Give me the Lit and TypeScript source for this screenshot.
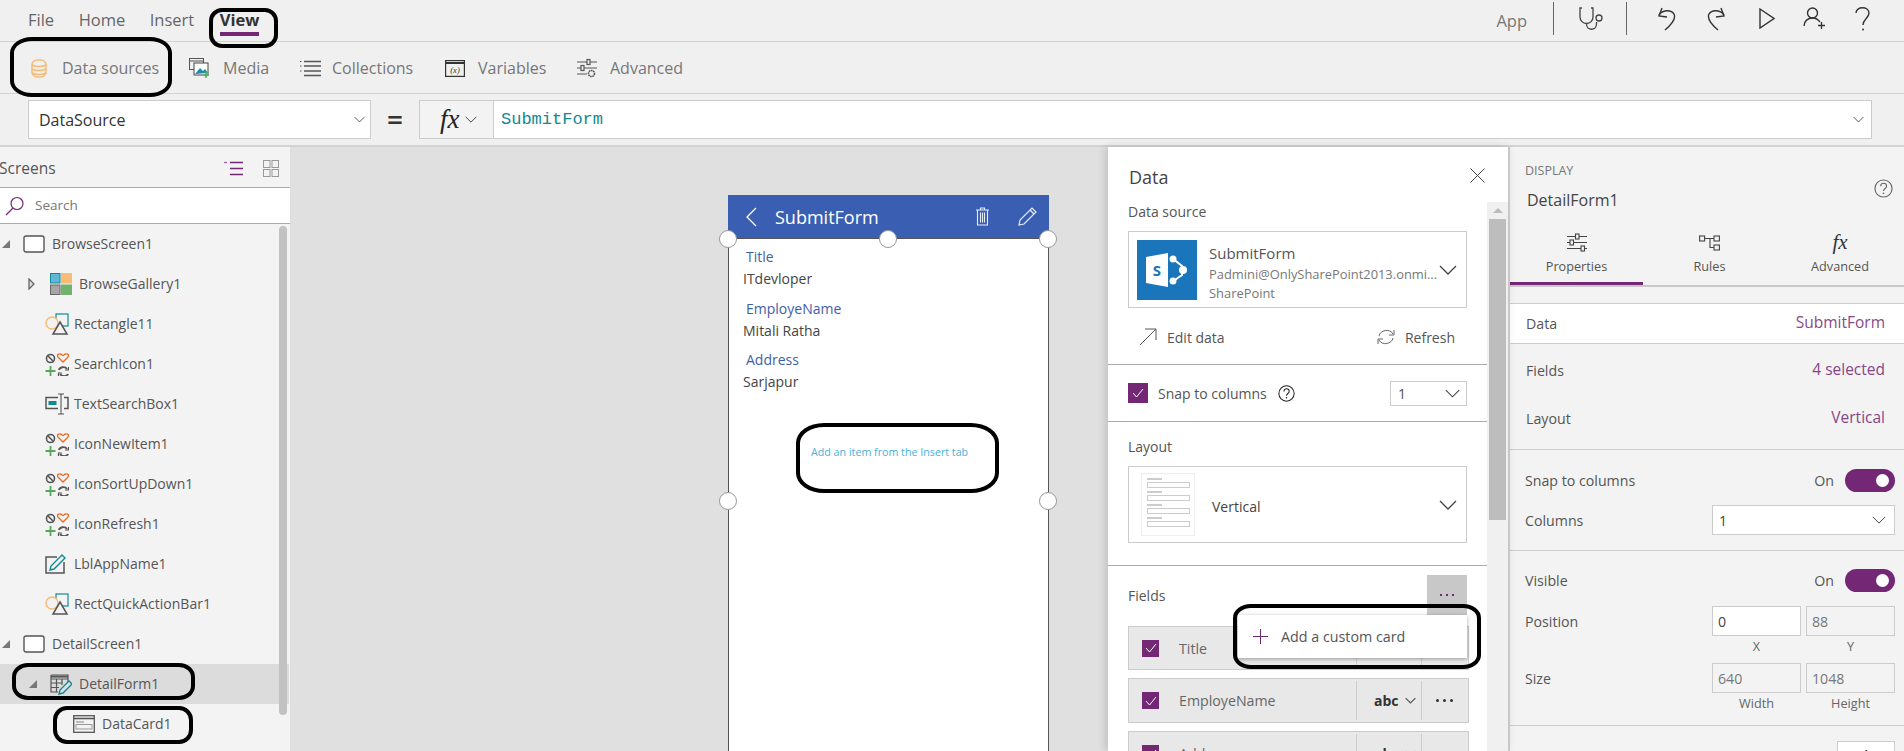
import { LitElement, html, css } from "lit";
import { customElement } from "lit/decorators.js";

const chev = (w = 18, h = 10, c = "#444", sw = 1.3) =>
  html`<svg width=${w} height=${h} viewBox="0 0 18 10"><path d="M1 1l8 8 8-8" fill="none" stroke=${c} stroke-width=${sw * 1.6}/></svg>`;

const icDb = html`<svg width="16" height="19" viewBox="0 0 16 19" fill="none" stroke="#f5bd78" stroke-width="1.6"><rect x="1" y="1" width="14" height="17" rx="5"/><path d="M1 6c3 2 11 2 14 0M1 10c3 2 11 2 14 0M1 14c3 2 11 2 14 0"/></svg>`;
const icMedia = html`<svg width="21" height="20" viewBox="0 0 21 20" fill="none"><rect x=".5" y=".5" width="14" height="11" fill="#f0f0f0" stroke="#555"/><path d="M.5 3h14" stroke="#555"/><rect x="5" y="5" width="14" height="12" fill="#fff" stroke="#444"/><path d="M6 16l5-6 3 3 2-2 3 4z" fill="#1b8fa8"/><path d="M17 14v6M14 17h6" stroke="#4fae5d" stroke-width="1.6"/></svg>`;
const icColl = html`<svg width="21" height="17" viewBox="0 0 21 17" fill="none" stroke="#555" stroke-width="1.4"><path d="M4 1.5h17M4 6h17M4 11h17M4 15.5h17"/><path d="M0 1.5h1.5M0 6h1.5M0 11h1.5" stroke-width="1.2"/></svg>`;
const icVars = html`<svg width="20" height="17" viewBox="0 0 20 17" fill="none"><rect x=".6" y=".6" width="18.8" height="15.8" stroke="#333" stroke-width="1.2"/><path d="M0 3h20" stroke="#333" stroke-width="2"/><text x="10" y="13" text-anchor="middle" font-size="8.5" font-style="italic" fill="#333" font-family="Liberation Serif, serif">(x)</text></svg>`;
const icAdv = html`<svg width="21" height="20" viewBox="0 0 21 20" fill="none" stroke="#555" stroke-width="1.2"><path d="M1 4h20M1 10h20M1 16h10"/><rect x="11" y="1.5" width="3" height="5" fill="#f0f0f0"/><rect x="5" y="7.5" width="3" height="5" fill="#f0f0f0"/><circle cx="15.5" cy="15.5" r="3" fill="#f0f0f0" stroke-width="1.6" stroke-dasharray="1.6 .6"/></svg>`;
const icSliders = html`<svg width="21" height="19" viewBox="0 0 21 19" fill="none" stroke="#444" stroke-width="1.1"><path d="M1 3.5h20M1 9.5h20M1 15.5h20"/><rect x="9.5" y="1" width="3.5" height="5" fill="#f3f3f3"/><rect x="4" y="7" width="3.5" height="5" fill="#f3f3f3"/><rect x="15" y="13" width="3.5" height="5" fill="#f3f3f3"/></svg>`;
const icRules = html`<svg width="21" height="17" viewBox="0 0 21 17" fill="none" stroke="#444" stroke-width="1.1"><rect x=".6" y="2" width="5" height="5"/><rect x="15" y="2" width="5.4" height="5"/><rect x="15" y="11" width="5.4" height="5"/><path d="M5.6 4.5H15M11 4.5v9h4"/></svg>`;

const icScreen = html`<svg width="22" height="18" viewBox="0 0 22 18"><rect x="1" y="1" width="20" height="16" rx="2" fill="#fff" stroke="#555" stroke-width="1.4"/></svg>`;
const icGallery = html`<svg width="22" height="22" viewBox="0 0 22 22"><rect x=".5" y=".5" width="9.5" height="9.5" fill="#63b7d4" stroke="#108a94"/><rect x="11" y="0" width="11" height="10.5" fill="#f7bc75"/><rect x=".5" y="12" width="9.5" height="9.5" fill="#a6a6a6" stroke="#666"/><rect x="11" y="11.5" width="11" height="10.5" fill="#6fb36f"/></svg>`;
const icShape = html`<svg width="24" height="22" viewBox="0 0 24 22" fill="none"><rect x="11" y="1" width="12" height="12" fill="#f3f3f3" stroke="#108a94" stroke-width="1.2"/><circle cx="7" cy="10" r="6" fill="#f3f3f3" stroke="#f5bd78" stroke-width="1.5"/><path d="M15 9l7 12H8z" fill="#f3f3f3" stroke="#555" stroke-width="1.5"/></svg>`;
const icMulti = html`<svg width="24" height="23" viewBox="0 0 24 23" fill="none"><circle cx="5.5" cy="5.5" r="4" stroke="#555" stroke-width="1.6"/><path d="M3 3l5 5" stroke="#555" stroke-width="1.6"/><path d="M18 9l-5-5c-1.5-2 .5-3.600 2.500-3 1 .2 2 1.500 2.500 1.500s1.500-1.300 2.500-1.500c2-.6 4 1 2.500 3z" stroke="#ea6a20" stroke-width="1.3"/><path d="M5.500 13v10M.5 18h10" stroke="#53a85c" stroke-width="1.8"/><path d="M14 17c.5-3 6-4 8-1M23 21c-1 2.500-6 3-8 0" stroke="#555" stroke-width="1.8"/><path d="M20 17h3.500v-3M17 20h-3.500v3" stroke="#555" stroke-width="1.200"/></svg>`;
const icTextbox = html`<svg width="24" height="22" viewBox="0 0 24 22" fill="none"><path d="M13 4.500H1v11h12M19 4.500h4v11h-4" stroke="#555" stroke-width="1.500"/><rect x="3.500" y="8" width="8" height="4" fill="#108a94"/><path d="M13 1h2.500l.5 1 .5-1H19M16 2v17M13 21h2.500l.5-1 .5 1H19" stroke="#555" stroke-width="1.100"/></svg>`;
const icLabel = html`<svg width="21" height="20" viewBox="0 0 21 20" fill="none"><path d="M19 8v11H1V3h11" stroke="#555" stroke-width="1.500"/><path d="M5 16l1-4L17 1l3 3L9 15z" fill="#f3f3f3" stroke="#108a94" stroke-width="1.400"/></svg>`;
const icForm = html`<svg width="22" height="21" viewBox="0 0 22 21" fill="none"><path d="M1 1h17v7M8 18H1V1M1 5h17M1 9h11M1 13.500h8M6.500 5v13M12 5v6" stroke="#555" stroke-width="1.200"/><path d="M1 2.600h17" stroke="#555" stroke-width="2"/><path d="M9 20l1-4 9-9 3 3-9 9z" fill="#e0e0e0" stroke="#108a94" stroke-width="1.400"/></svg>`;
const icCard = html`<svg width="22" height="18" viewBox="0 0 22 18" fill="none"><rect x=".7" y=".7" width="20.600" height="16.600" stroke="#555" stroke-width="1.300"/><path d="M.7 3.500h20.600" stroke="#555" stroke-width="1.600"/><path d="M3 7h8" stroke="#999" stroke-width="1.200"/><rect x="3" y="9.500" width="16" height="4.500" stroke="#999"/></svg>`;
const triDown = html`<svg width="10" height="10" viewBox="0 0 10 10"><path d="M9 1v8H1z" fill="#777"/></svg>`;
const triRight = html`<svg width="7" height="12" viewBox="0 0 7 12"><path d="M1 1l5 5-5 5z" fill="#ddd" stroke="#666" stroke-width="1.300"/></svg>`;

const check = html`<svg width="12" height="10" viewBox="0 0 12 10"><path d="M1 5l3.500 4L11 1" fill="none" stroke="#fff" stroke-width="1"/></svg>`;
const help = (s: number, c: string) =>
  html`<svg width=${s} height=${s} viewBox="0 0 20 20" fill="none"><circle cx="10" cy="10" r="9" stroke=${c} stroke-width="1.200"/><path d="M7 7.500c0-4 6.200-4 6.200 0 0 2.500-3.200 2.500-3.200 5" stroke=${c} stroke-width="1.200"/><circle cx="10" cy="15" r=".9" fill=${c}/></svg>`;

type Row = { n: string; ic: unknown; lv: string; ar?: unknown; sel?: boolean };
const rows: Row[] = [
  { n: "BrowseScreen1", ic: icScreen, lv: "l0", ar: triDown },
  { n: "BrowseGallery1", ic: icGallery, lv: "lg", ar: triRight },
  { n: "Rectangle11", ic: icShape, lv: "l1" },
  { n: "SearchIcon1", ic: icMulti, lv: "l1" },
  { n: "TextSearchBox1", ic: icTextbox, lv: "l1" },
  { n: "IconNewItem1", ic: icMulti, lv: "l1" },
  { n: "IconSortUpDown1", ic: icMulti, lv: "l1" },
  { n: "IconRefresh1", ic: icMulti, lv: "l1" },
  { n: "LblAppName1", ic: icLabel, lv: "l1" },
  { n: "RectQuickActionBar1", ic: icShape, lv: "l1" },
  { n: "DetailScreen1", ic: icScreen, lv: "l0", ar: triDown },
  { n: "DetailForm1", ic: icForm, lv: "lg", ar: triDown, sel: true },
  { n: "DataCard1", ic: icCard, lv: "lc" },
];

const marks = [
  { x: 209, y: 8, w: 69, h: 40, r: "13px" },
  { x: 10, y: 37, w: 162, h: 60, r: "22px / 16px" },
  { x: 12, y: 663, w: 183, h: 37, r: "16px / 14px" },
  { x: 53, y: 706, w: 140, h: 38, r: "14px" },
  { x: 796, y: 423, w: 203, h: 70, r: "28px / 20px" },
  { x: 1233, y: 604, w: 248, h: 65, r: "18px / 14px" },
];

const fields = [
  { n: "Title", h: 44, covered: true },
  { n: "EmployeName", h: 45, covered: false },
  { n: "Address", h: 45, covered: false },
];

const form = [
  ["Title", "ITdevloper"],
  ["EmployeName", "Mitali Ratha"],
  ["Address", "Sarjapur"],
];

const handles = [
  [0, 44],
  [160, 44],
  [320, 44],
  [0, 306],
  [320, 306],
];

@customElement("app-root")
export class AppRoot extends LitElement {
  static styles = css`
    :host { display: block; position: relative; width: 1904px; height: 751px; overflow: hidden; background: #f0f0f0; font-family: "Open Sans", "Noto Sans", sans-serif; color: #555; }
    * { box-sizing: border-box; }
    svg { display: block; flex: none; }

    .top { height: 42px; border-bottom: 1px solid #d2d2d2; display: flex; align-items: center; padding-left: 28px; padding-bottom: 1px; }
    .tab { font-size: 16.500px; color: #666; margin-right: 24.500px; position: relative; line-height: 22px; }
    .tab.on { font-size: 16.500px; font-weight: 700; color: #333; margin-left: 1px; }
    .tab.on::after { content: ""; position: absolute; left: 0; right: 0; top: 23px; height: 4px; background: #742774; }
    .spacer { flex: 1; }
    .app { font-size: 16.500px; color: #777; margin-right: 26px; }
    .sep { width: 1px; height: 33px; background: #666; margin-top: -4px; }
    .ticons { display: flex; align-items: center; height: 36px; margin-top: -3px; }

    .ribbon { height: 52px; border-bottom: 1px solid #d2d2d2; display: flex; align-items: center; padding-left: 31px; padding-top: 1px; }
    .rb { display: flex; align-items: center; font-size: 16px; color: #777; }
    .rb span { margin-left: var(--g); }

    .formula { height: 53px; border-bottom: 2px solid #d2d2d2; display: flex; align-items: flex-start; padding: 6px 0 0 28px; }
    .prop { width: 343px; height: 39px; background: #fff; border: 1px solid #ccc; display: flex; align-items: center; justify-content: space-between; padding: 0 5px 0 10px; font-size: 16px; color: #333; }
    .eq { width: 48px; text-align: center; font-size: 28px; font-weight: 600; color: #333; line-height: 39px; }
    .fx { width: 75px; height: 39px; border: 1px solid #ccc; background: #f3f3f3; display: flex; align-items: center; padding-left: 20px; gap: 5px; }
    .fxt { font-family: "Liberation Serif", serif; font-style: italic; font-size: 27px; color: #222; line-height: 1; }
    .fbox { width: 1378px; height: 39px; background: #fff; border: 1px solid #ccc; border-left: 0; display: flex; align-items: center; justify-content: space-between; padding: 0 7px; font-family: "Liberation Mono", monospace; font-size: 17px; color: #108a94; }
    .fbox span { margin-top: -1px; }

    .main { display: flex; height: 604px; }
    .side { width: 291px; background: #f3f3f3; flex: none; position: relative; border-right: 1px solid #ddd; }
    .shead { height: 40px; display: flex; align-items: center; font-size: 15.500px; color: #555; padding-top: 2px; margin-left: -1px; }
    .shead .t { flex: 1; }
    .search { height: 37px; background: #fff; border: 1px solid #aaa; border-width: 1px 0; display: flex; align-items: center; padding-left: 5px; gap: 10px; font-size: 13.500px; color: #777; }
    .search span { margin-top: -2px; }
    .row { height: 40px; display: flex; align-items: center; font-size: 14px; color: #555; width: 289px; }
    .row span { margin-top: -2px; }
    .row.sel { background: #dcdcdc; }
    .ind { flex: none; display: flex; align-items: center; }
    .l0 .ind { width: 23px; padding-left: 1px; }
    .lg .ind { width: 50px; padding-left: 28px; }
    .l1 .ind { width: 45px; }
    .lc .ind { width: 73px; }
    .ics { flex: none; display: flex; align-items: center; justify-content: flex-start; width: 29px; }
    .sb { position: absolute; left: 279px; top: 79px; width: 8px; height: 489px; border-radius: 4px; background: #c2c2c2; }

    .canvas { flex: 1; background: #e0e0e0; padding: 48px 0 0 437px; min-width: 0; }
    .phone { width: 321px; height: 600px; background: #fff; border: 1px solid #555; border-top: 0; position: relative; }
    .phead { height: 44px; margin: 0 -1px 0 -1px; background: #3a5fb2; display: flex; align-items: center; color: #fff; padding-left: 18px; border-bottom: 1px solid #555; }
    .phead .ti { font-size: 18px; margin-left: 18px; flex: 1; color: #fff; }
    .fields { padding-top: 7px; }
    .fg { margin-left: 14px; height: 51.500px; display: flex; flex-direction: column; justify-content: flex-start; }
    .fg .l { font-size: 14px; color: #3f5ea8; margin-left: 3px; line-height: 22px; }
    .fg .v { font-size: 14px; color: #444; line-height: 22px; }
    .hint { margin: 44px 0 0 82px; font-size: 10.700px; line-height: 15px; color: #4ab0d9; }
    .h { position: absolute; width: 18px; height: 18px; border-radius: 50%; background: #fff; border: 1px solid #999; transform: translate(-9px, -9px); }

    .data { width: 402px; flex: none; background: #fff; border-right: 2px solid #c8c8c8; box-shadow: -3px 0 8px rgba(0,0,0,.14); position: relative; display: flex; flex-direction: column; z-index: 1; }
    .dhead { height: 55px; display: flex; align-items: center; justify-content: space-between; padding: 4px 23px 0 21px; font-size: 18px; color: #444; }
    .dhead svg { margin-top: -2px; }
    .dbody { display: flex; flex: 1; min-height: 0; overflow: hidden; }
    .dcol { width: 379px; flex: none; padding: 0; }
    .dsb { flex: 1; background: #f0f0f0; position: relative; padding: 6px 2px 0; }
    .dsb .up { width: 0; height: 0; border: 5px solid transparent; border-bottom: 5px solid #bbb; border-top: 0; margin: 0 auto 6px; }
    .dsb .th { height: 301px; background: #bdbdbd; margin-top: 0; }
    .sec { padding: 0 20px; border-bottom: 1px solid #aaa; }
    .lab { font-size: 14px; color: #555; line-height: 20px; }
    .box { border: 1px solid #ccc; display: flex; align-items: center; position: relative; }
    .src { height: 77px; margin-top: 9px; padding-left: 8px; }
    .tile { width: 60px; height: 60px; background: #1a75bb; flex: none; display: flex; align-items: center; justify-content: center; margin-right: 12px; }
    .srct { flex: 1; min-width: 0; display: flex; flex-direction: column; margin-top: 5px; }
    .srct .a { font-size: 15px; color: #555; line-height: 22px; }
    .srct .b { font-size: 12.900px; color: #777; line-height: 20px; white-space: nowrap; }
    .srct .b + .b { line-height: 18px; }
    .boxch { margin: 0 9px 0 0; flex: none; }
    .acts { height: 56px; display: flex; align-items: center; justify-content: space-between; padding: 2px 12px 0 11px; font-size: 14px; }
    .act { display: flex; align-items: center; gap: 10px; color: #555; }
    .snap { height: 57px; display: flex; align-items: center; }
    .cb { background: #742774; display: flex; align-items: center; justify-content: center; flex: none; }
    .cb.big { width: 20px; height: 20px; margin-right: 10px; }
    .cb.sm { width: 17px; height: 17px; }
    .snap .txt { font-size: 14px; margin-right: 11px; }
    .mini { width: 77px; height: 25px; border: 1px solid #ccc; margin-left: auto; display: flex; align-items: center; justify-content: space-between; padding: 0 6px 0 7px; font-size: 14px; }
    .lay { padding-top: 15px; padding-bottom: 22px; }
    .lay .box { height: 77px; margin-top: 9px; padding-left: 12px; }
    .thumb { width: 54px; height: 63px; border: 1px solid #eee; padding: 4px 4px 0 5px; display: flex; flex-direction: column; margin-right: 17px; flex: none; }
    .thumb i { display: block; height: 2px; width: 15px; background: #ccc; margin-bottom: 2px; }
    .thumb b { display: block; height: 6px; border: 1px solid #ccc; margin-bottom: 3px; }
    .lay .v { flex: 1; font-size: 14px; color: #444; margin-top: 3px; }
    .fl { padding: 9px 20px 0; }
    .flh { height: 40px; display: flex; align-items: center; justify-content: space-between; margin-bottom: 11px; }
    .flh .lab { margin-top: 2px; }
    .more { width: 40px; height: 40px; background: #c8c8c8; display: flex; align-items: center; justify-content: center; gap: 4px; padding-top: 0; }
    .more i { width: 2px; height: 2px; background: #742774; }
    .frow { display: flex; align-items: center; border: 1px solid #ccc; background: #e8e8e8; margin: 0 -2px 8px 0; flex: none; padding-left: 13px; }
    .frow .nm { width: 177px; margin-left: 20px; font-size: 14.200px; color: #666; flex: none; }
    .frow .ty, .frow .dt { align-self: stretch; margin: 2px 0; border-left: 1px solid #ccc; display: flex; align-items: center; }
    .frow .ty { width: 65px; padding-left: 17px; gap: 6px; font-size: 14px; font-weight: 700; color: #333; }
    .frow .dt { flex: 1; justify-content: center; gap: 4px; padding-right: 2px; }
    .frow .dt i { width: 3px; height: 3px; border-radius: 50%; background: #333; }
    .pop { position: absolute; left: 130px; top: 468px; width: 229px; height: 43px; background: #fff; box-shadow: 0 1px 4px rgba(0,0,0,.35); display: flex; align-items: center; padding-left: 15px; gap: 13px; font-size: 14.300px; color: #555; z-index: 2; }

    .props { width: 394px; flex: none; background: #f3f3f3; }
    .pd { height: 78px; padding: 14px 11px 0 15px; display: flex; justify-content: space-between; }
    .pd .d { font-size: 12.500px; color: #777; line-height: 20px; }
    .pd .f { font-size: 16px; color: #444; line-height: 24px; margin-top: 7px; margin-left: 2px; }
    .pd .hp { margin-top: 18px; }
    .tabs { height: 62px; display: grid; grid-template-columns: 133px 133px 128px; border-bottom: 2px solid #c8c8c8; }
    .pt { display: flex; flex-direction: column; align-items: center; font-size: 12.700px; color: #555; padding-top: 7px; height: 60px; }
    .pt .i { height: 21px; display: flex; align-items: center; margin-bottom: 4px; }
    .pt.on { border-bottom: 3px solid #742774; }
    .pfx { font-family: "Liberation Serif", serif; font-style: italic; font-size: 21px; color: #333; line-height: 21px; }
    .pgap { height: 16px; }
    .pr { display: flex; align-items: center; justify-content: space-between; padding: 0 19px 0 16px; font-size: 14.200px; color: #555; }
    .pr .val { color: #742774; font-size: 15.500px; opacity: .85; margin-top: -3px; }
    .pr.w { height: 41px; background: #fff; border: 1px solid #ccc; border-width: 1px 0; }
    .pr.m { height: 48px; }
    .ps { padding: 19px 9px 15px 15px; border-bottom: 1px solid #ccc; border-top: 1px solid #ccc; }
    .ps + .ps { border-top: 0; padding-top: 18px; padding-bottom: 10px; }
    .pf { display: flex; align-items: center; justify-content: space-between; font-size: 14.200px; color: #555; }
    .tog { display: flex; align-items: center; gap: 11px; }
    .sw { width: 50px; height: 23px; border-radius: 12px; background: #742774; display: flex; align-items: center; justify-content: flex-end; padding-right: 6px; }
    .sw i { width: 13px; height: 13px; border-radius: 50%; background: #fff; }
    .sel2 { width: 183px; height: 30px; background: #fff; border: 1px solid #ccc; display: flex; align-items: center; justify-content: space-between; padding: 0 8px 0 6px; color: #444; }
    .two { display: flex; gap: 5px; }
    .in { width: 89px; height: 30px; border: 1px solid #ccc; display: flex; align-items: center; padding-left: 5px; color: #777; }
    .in.w { background: #fff; color: #444; }
    .cap { width: 89px; text-align: center; font-size: 12.700px; color: #666; line-height: 20px; }
    .capr { display: flex; justify-content: flex-end; gap: 5px; height: 22px; }
    .last { display: flex; justify-content: flex-end; padding: 15px 9px 0 0; }
    .last .in { width: 58px; height: 30px; background: #fff; color: #444; padding: 0; justify-content: center; }

    .mark { position: absolute; border: 4px solid #000; pointer-events: none; z-index: 5; }
  `;

  render() {
    return html`
      <div class="top">
        <span class="tab">File</span><span class="tab">Home</span><span class="tab">Insert</span><span class="tab on">View</span>
        <div class="spacer"></div>
        <span class="app">App</span>
        <div class="sep"></div>
        <div class="ticons" style="margin-left:25px;margin-right:22px">
          <svg width="25" height="24" viewBox="0 0 25 24" fill="none" stroke="#444" stroke-width="1.300"><path d="M3 1H1v9a6 6 0 0 0 13 0V1h-2"/><path d="M7.500 16v1c0 7 10 7 10 0v-2"/><circle cx="20" cy="11" r="3"/></svg>
        </div>
        <div class="sep"></div>
        <div class="ticons" style="margin-left:31px;margin-right:31px">
          <svg width="18" height="24" viewBox="0 0 18 24" fill="none" stroke="#333" stroke-width="1.400"><path d="M4 1L1 9l8 1"/><path d="M1 8c3-5 12-6 15-1 2 4-2 10-9 16"/></svg>
        </div>
        <div class="ticons" style="margin-right:34px">
          <svg width="18" height="24" viewBox="0 0 18 24" fill="none" stroke="#333" stroke-width="1.400"><path d="M14 1l3 8-8 1"/><path d="M17 8c-3-5-12-6-15-1-2 4 2 10 9 16"/></svg>
        </div>
        <div class="ticons" style="margin-right:28px">
          <svg width="16" height="21" viewBox="0 0 16 21" fill="none" stroke="#333" stroke-width="1.400"><path d="M1 1l14 9.500L1 20z"/></svg>
        </div>
        <div class="ticons" style="margin-right:29px">
          <svg width="23" height="23" viewBox="0 0 23 23" fill="none" stroke="#333" stroke-width="1.400"><circle cx="9.500" cy="6" r="5"/><path d="M1 19c0-5 4-8 8.500-8s6 2 7.500 4"/><path d="M18.500 15v7M15 18.500h7" stroke-width="1.300"/></svg>
        </div>
        <div class="ticons" style="margin-right:34px">
          <svg width="15" height="24" viewBox="0 0 15 24" fill="none" stroke="#333" stroke-width="1.400"><path d="M1 6c0-7 13-7 13 0 0 5-6 6-6 12"/><circle cx="8" cy="22.500" r="1" fill="#333" stroke="none"/></svg>
        </div>
      </div>

      <div class="ribbon">
        <div class="rb" style="--g:15px;width:158px">${icDb}<span>Data sources</span></div>
        <div class="rb" style="--g:13px;width:111px">${icMedia}<span>Media</span></div>
        <div class="rb" style="--g:11px;width:145px">${icColl}<span>Collections</span></div>
        <div class="rb" style="--g:13px;width:131px">${icVars}<span>Variables</span></div>
        <div class="rb" style="--g:13px">${icAdv}<span>Advanced</span></div>
      </div>

      <div class="formula">
        <div class="prop"><span>DataSource</span>${chev(11, 7, "#444", 0.9)}</div>
        <div class="eq">=</div>
        <div class="fx"><span class="fxt">fx</span>${chev(12, 7, "#444", 0.9)}</div>
        <div class="fbox"><span>SubmitForm</span>${chev(11, 7, "#444", 0.9)}</div>
      </div>

      <div class="main">
        <div class="side">
          <div class="shead">
            <span class="t">Screens</span>
            <svg width="19" height="15" viewBox="0 0 19 15" fill="none" stroke="#742774" stroke-width="1.400" style="margin-right:20px"><path d="M6 1.500h13M6 7.500h13M6 13.500h13"/><path d="M0 1.500h3" stroke="#a06aa0"/></svg>
            <svg width="16" height="17" viewBox="0 0 16 17" fill="none" stroke="#999" style="margin-right:11px"><rect x=".5" y=".5" width="6.500" height="7"/><rect x="9" y=".5" width="6.500" height="7"/><rect x=".5" y="9.500" width="6.500" height="7"/><rect x="9" y="9.500" width="6.500" height="7"/></svg>
          </div>
          <div class="search">
            <svg width="20" height="20" viewBox="0 0 20 20" fill="none" stroke="#742774" stroke-width="1.200"><circle cx="12" cy="7.500" r="6"/><path d="M8 12L1 19"/></svg>
            <span>Search</span>
          </div>
          ${rows.map(
            (r) => html`<div class="row ${r.lv} ${r.sel ? "sel" : ""}">
              <div class="ind">${r.ar ?? ""}</div>
              <div class="ics">${r.ic}</div>
              <span>${r.n}</span>
            </div>`
          )}
          <div class="sb"></div>
        </div>

        <div class="canvas">
          <div class="phone">
            <div class="phead">
              <svg width="11" height="20" viewBox="0 0 11 20" fill="none" stroke="#fff" stroke-width="1.300"><path d="M10 1L1 10l9 9"/></svg>
              <span class="ti">SubmitForm</span>
              <svg width="13" height="19" viewBox="0 0 13 19" fill="none" stroke="#e6ecf7" stroke-width="1.100" style="margin-right:29px"><path d="M0 3h13M4.500 3V1h4v2M1.500 3v15h10V3M4.500 5.500v10M6.500 5.500v10M8.500 5.500v10"/></svg>
              <svg width="19" height="19" viewBox="0 0 19 19" fill="none" stroke="#e6ecf7" stroke-width="1.200" style="margin-right:12px"><path d="M1 18l1-5L14 1l4 4L6 17z"/><path d="M12 3l4 4"/></svg>
            </div>
            <div class="fields">
              ${form.map(
                ([l, v]) => html`<div class="fg"><span class="l">${l}</span><span class="v">${v}</span></div>`
              )}
            </div>
            <div class="hint">Add an item from the Insert tab</div>
            ${handles.map(
              ([x, y]) => html`<div class="h" style="left:${x - 1}px;top:${y}px"></div>`
            )}
          </div>
        </div>

        <div class="data">
          <div class="dhead">
            <span>Data</span>
            <svg width="15" height="15" viewBox="0 0 15 15" fill="none" stroke="#444" stroke-width="1"><path d="M.5.500l14 14M14.500.500l-14 14"/></svg>
          </div>
          <div class="dbody">
            <div class="dcol">
              <div class="sec">
                <div class="lab">Data source</div>
                <div class="box src">
                  <div class="tile">
                    <svg width="42" height="34" viewBox="0 0 42 34"><path d="M0 4l22-4v34L0 30z" fill="#fff"/><text x="11" y="23" text-anchor="middle" font-size="15" font-weight="700" fill="#1a75bb" font-family="Open Sans, sans-serif">S</text><path d="M26 5l10 8v9l-10 7" fill="none" stroke="#fff" stroke-width="2"/><circle cx="27" cy="6" r="3.500" fill="#fff"/><circle cx="37" cy="17" r="4" fill="#fff"/><circle cx="27" cy="28" r="3.500" fill="#fff"/></svg>
                  </div>
                  <div class="srct">
                    <span class="a">SubmitForm</span>
                    <span class="b">Padmini@OnlySharePoint2013.onmi...</span>
                    <span class="b">SharePoint</span>
                  </div>
                  <div class="boxch">${chev(18, 10, "#444", 0.8)}</div>
                </div>
                <div class="acts">
                  <div class="act">
                    <svg width="18" height="18" viewBox="0 0 18 18" fill="none" stroke="#555" stroke-width="1"><path d="M1 17L17 1M6 1h11v11"/></svg>
                    Edit data
                  </div>
                  <div class="act">
                    <svg width="18" height="16" viewBox="0 0 18 16" fill="none" stroke="#666" stroke-width="1"><path d="M2 7c1-6 11-8 14-2M16 9c-1 6-11 8-14 2"/><path d="M17 1v5h-5M1 15v-5h5"/></svg>
                    Refresh
                  </div>
                </div>
              </div>
              <div class="sec snap">
                <div class="cb big">${check}</div>
                <span class="txt">Snap to columns</span>
                ${help(17, "#222")}
                <div class="mini"><span>1</span>${chev(15, 9, "#444", 0.8)}</div>
              </div>
              <div class="sec lay">
                <div class="lab">Layout</div>
                <div class="box">
                  <div class="thumb">
                    ${[0, 1, 2, 3].map(() => html`<i></i><b></b>`)}
                  </div>
                  <span class="v">Vertical</span>
                  <div class="boxch">${chev(18, 10, "#444", 0.8)}</div>
                </div>
              </div>
              <div class="fl">
                <div class="flh">
                  <span class="lab">Fields</span>
                  <div class="more"><i></i><i></i><i></i></div>
                </div>
                ${fields.map(
                  (f) => html`<div class="frow" style="height:${f.h}px">
                    <div class="cb sm">${check}</div>
                    <span class="nm">${f.n}</span>
                    <div class="ty">${f.covered ? "" : html`abc ${chev(11, 7, "#555", 1.2)}`}</div>
                    <div class="dt">${f.covered ? "" : html`<i></i><i></i><i></i>`}</div>
                  </div>`
                )}
              </div>
            </div>
            <div class="dsb"><div class="up"></div><div class="th"></div></div>
          </div>
          <div class="pop">
            <svg width="15" height="15" viewBox="0 0 15 15" stroke="#742774" fill="none"><path d="M7.500 0v15M0 7.500h15"/></svg>
            Add a custom card
          </div>
        </div>

        <div class="props">
          <div class="pd">
            <div>
              <div class="d">DISPLAY</div>
              <div class="f">DetailForm1</div>
            </div>
            <div class="hp">${help(19, "#666")}</div>
          </div>
          <div class="tabs">
            <div class="pt on"><div class="i">${icSliders}</div>Properties</div>
            <div class="pt"><div class="i">${icRules}</div>Rules</div>
            <div class="pt"><div class="i"><span class="pfx">fx</span></div>Advanced</div>
          </div>
          <div class="pgap"></div>
          <div class="pr w"><span>Data</span><span class="val">SubmitForm</span></div>
          <div class="pr m" style="margin-top:2px"><span>Fields</span><span class="val">4 selected</span></div>
          <div class="pr m"><span>Layout</span><span class="val">Vertical</span></div>
          <div style="height:7px"></div>
          <div class="ps">
            <div class="pf"><span>Snap to columns</span><div class="tog"><span>On</span><div class="sw"><i></i></div></div></div>
            <div class="pf" style="margin-top:13px"><span>Columns</span><div class="sel2"><span>1</span>${chev(14, 8, "#444", 0.8)}</div></div>
          </div>
          <div class="ps">
            <div class="pf"><span>Visible</span><div class="tog"><span>On</span><div class="sw"><i></i></div></div></div>
            <div class="pf" style="margin-top:14px"><span>Position</span><div class="two"><div class="in w">0</div><div class="in">88</div></div></div>
            <div class="capr"><span class="cap">X</span><span class="cap">Y</span></div>
            <div class="pf" style="margin-top:5px"><span>Size</span><div class="two"><div class="in">640</div><div class="in">1048</div></div></div>
            <div class="capr"><span class="cap">Width</span><span class="cap">Height</span></div>
          </div>
          <div class="last"><div class="in">1</div></div>
        </div>
      </div>

      ${marks.map(
        (m) => html`<div class="mark" style="left:${m.x}px;top:${m.y}px;width:${m.w}px;height:${m.h}px;border-radius:${m.r}"></div>`
      )}
    `;
  }
}
